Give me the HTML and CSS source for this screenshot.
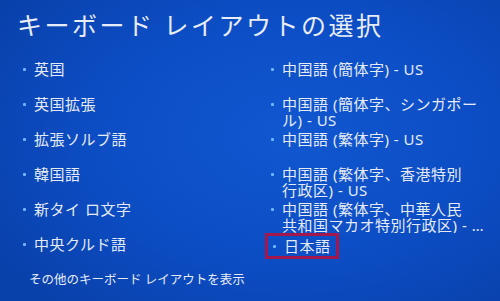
FILE: index.html
```html
<!DOCTYPE html>
<html lang="ja">
<head>
<meta charset="utf-8">
<title>キーボード レイアウトの選択</title>
<link rel="stylesheet" href="styles.css">
</head>
<body>
<div class="screen">
  <h1 class="title">キーボード レイアウトの選択</h1>
  <div class="grid">
    <div class="item"><span class="dot"></span><span class="label">英国</span></div>
    <div class="item"><span class="dot"></span><span class="label">英国拡張</span></div>
    <div class="item"><span class="dot"></span><span class="label">拡張ソルブ語</span></div>
    <div class="item"><span class="dot"></span><span class="label">韓国語</span></div>
    <div class="item"><span class="dot"></span><span class="label">新タイ ロ文字</span></div>
    <div class="item"><span class="dot"></span><span class="label">中央クルド語</span></div>
    <div class="item"><span class="dot"></span><span class="label">中国語 (簡体字) - US</span></div>
    <div class="item"><span class="dot"></span><span class="label">中国語 (簡体字、シンガポー<br>ル) - US</span></div>
    <div class="item"><span class="dot"></span><span class="label">中国語 (繁体字) - US</span></div>
    <div class="item"><span class="dot"></span><span class="label">中国語 (繁体字、香港特別<br>行政区) - US</span></div>
    <div class="item"><span class="dot"></span><span class="label">中国語 (繁体字、中華人民<span class="clip">共和国マカオ特別行政区) - US</span></span></div>
    <div class="item selected"><span class="dot"></span><span class="label">日本語</span></div>
  </div>
  <div class="more">その他のキーボード レイアウトを表示</div>
</div>
</body>
</html>
```
FILE: styles.css
```css
html, body {
  margin: 0;
  padding: 0;
}
body {
  width: 500px;
  height: 301px;
  overflow: hidden;
  font-family: "Noto Sans", "Noto Sans CJK JP", sans-serif;
  color: #e4ebf8;
  background: radial-gradient(ellipse 70% 75% at 58% 45%, #1157d0 0%, #0c4dc4 55%, #0941ab 100%);
}
.screen {
  height: 301px;
  padding: 10px 0 0 0;
  box-sizing: border-box;
}
.title {
  margin: 0 0 0 17px;
  font-size: 25px;
  line-height: 30px;
  font-weight: 400;
  letter-spacing: 2.5px;
  color: #e6ecf8;
  white-space: nowrap;
}
.grid {
  margin-top: 21px;
  padding-left: 23px;
  display: grid;
  grid-template-columns: 248px 1fr;
  grid-template-rows: repeat(6, 35px);
  grid-auto-flow: column;
}
.item {
  display: flex;
  align-items: flex-start;
  gap: 8px;
  font-size: 15px;
  line-height: 16px;
  letter-spacing: 0.5px;
  white-space: nowrap;
  align-self: start;
}
.dot {
  flex: none;
  width: 3px;
  height: 3px;
  margin-top: 7px;
  background: #6cb6ff;
  border-radius: 1px;
}
.clip {
  display: block;
  width: 204px;
  overflow: hidden;
  text-overflow: ellipsis;
  white-space: nowrap;
}
.selected {
  margin: -3px 0 0 -6px;
  padding: 2px 5px 2px 5px;
  border: 3px solid #a3184c;
  width: 58px;
}
.more {
  margin: 1px 0 0 29px;
  font-size: 12.5px;
  line-height: 16px;
  white-space: nowrap;
  color: #e4ebf8;
}
```
